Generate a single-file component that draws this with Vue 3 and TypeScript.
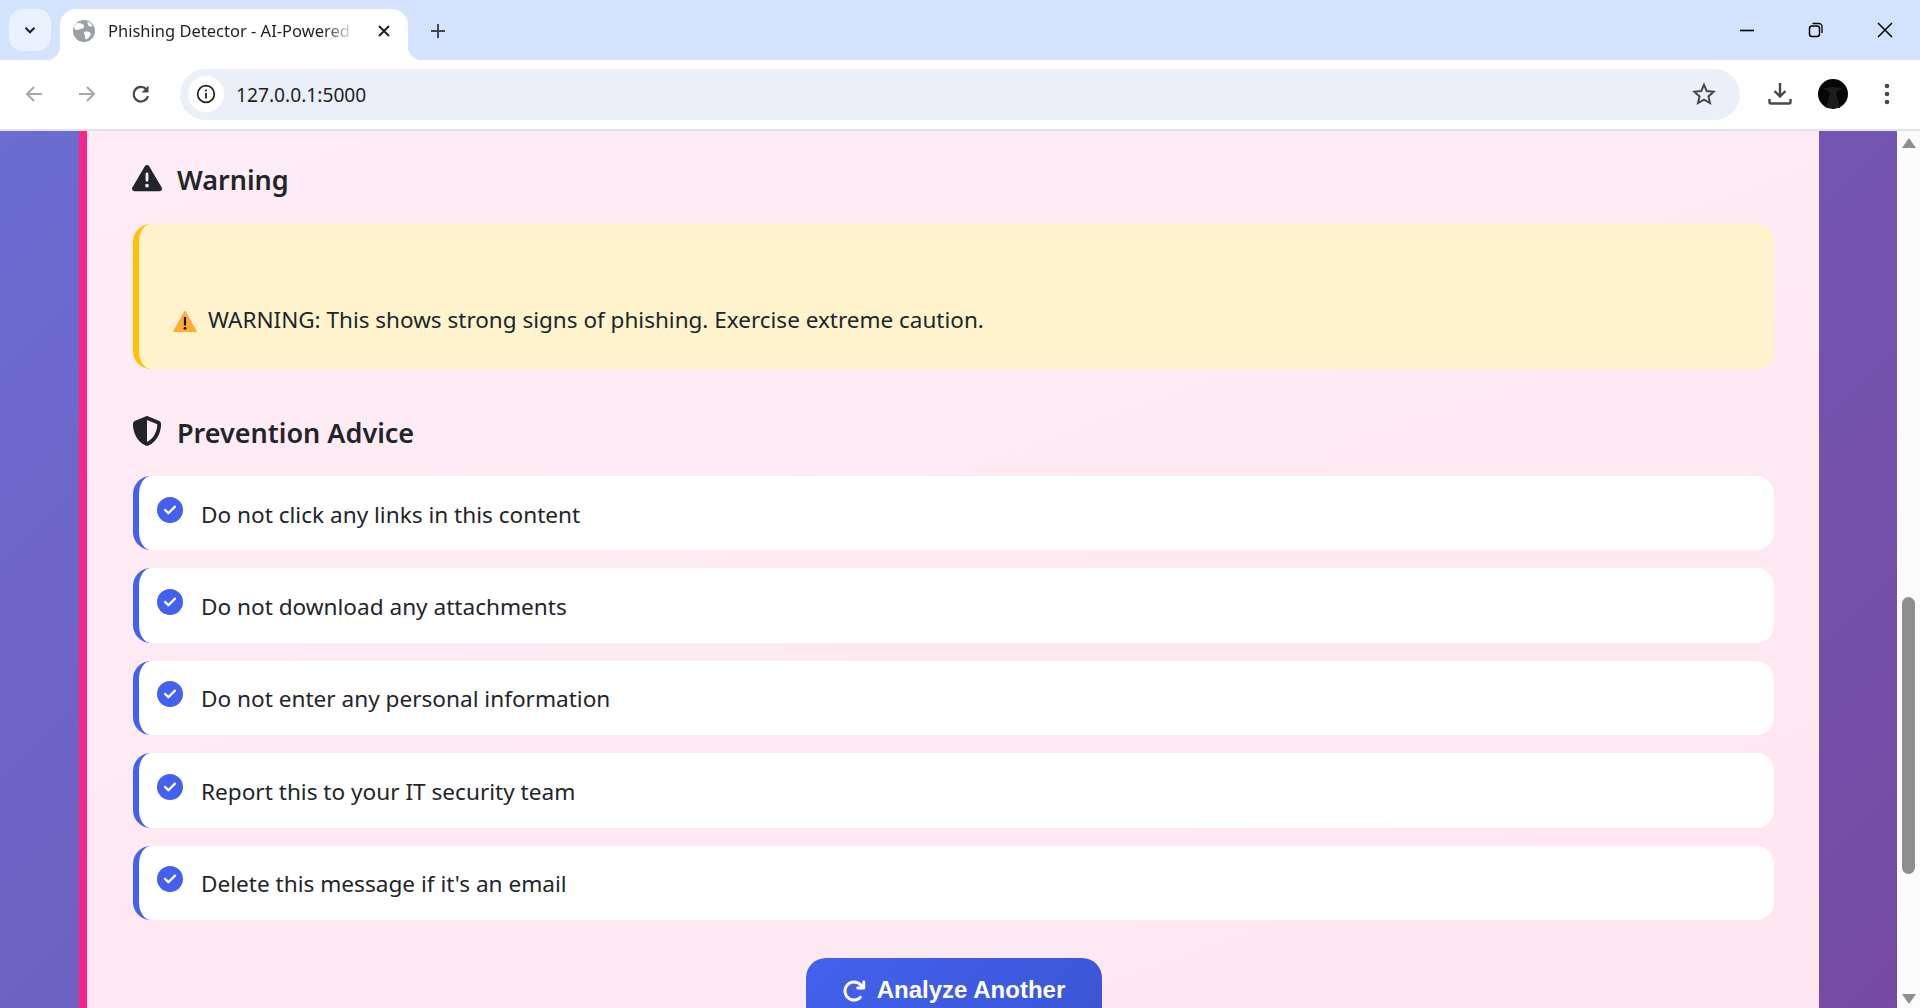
<script setup lang="ts">
const tips: string[] = [
  'Do not click any links in this content',
  'Do not download any attachments',
  'Do not enter any personal information',
  'Report this to your IT security team',
  "Delete this message if it's an email",
]
</script>

<template>
  <div class="window">
    <!-- browser chrome -->
    <div class="tabstrip">
      <button class="tab-search">
        <svg width="14" height="14" viewBox="0 0 14 14"><path d="M2.500 4.800 7 9.300l4.500-4.500" fill="none" stroke="#1f1f1f" stroke-width="2" /></svg>
      </button>
      <div class="tab">
        <svg class="globe" width="22" height="22" viewBox="0 0 18 18">
          <circle cx="9" cy="9" r="9" fill="#9aa0a6" />
          <path d="M4 2.500c3 .2 4.500 .8 5 2.500S7 7.500 5.500 7.500 3 9 1.500 7.500 2 3 4 2.500zM10 9.500c2 -.5 4 0 4.500 1.500s-2.500 4.500-4 5c-1-1.500-.5-3-1-4s-1-2 .5-2.500zM12 1.500c1.500 .5 3 1.500 4 3.500-1.500 .5-3 .3-3.500-1s-1-2-.5-2.500z" fill="#fff" />
        </svg>
        <span class="tab-title">Phishing Detector - AI-Powered</span>
        <svg class="tab-close" width="14" height="14" viewBox="0 0 14 14"><path d="M2 2l10 10M12 2 2 12" stroke="#1f1f1f" stroke-width="2" /></svg>
      </div>
      <svg class="new-tab" width="16" height="16" viewBox="0 0 16 16"><path d="M8 1v14M1 8h14" stroke="#474747" stroke-width="2" /></svg>
      <div class="win-controls">
        <svg width="16" height="16" viewBox="0 0 16 16"><path d="M1 8.500h14" stroke="#000" stroke-width="1.600" /></svg>
        <svg width="16" height="16" viewBox="0 0 16 16"><rect x="1.500" y="4" width="10" height="10.500" rx="2.500" fill="none" stroke="#000" stroke-width="1.500" /><path d="M4.500 1.500h6.500a3 3 0 0 1 3 3v6.500" fill="none" stroke="#000" stroke-width="1.300" /></svg>
        <svg width="16" height="16" viewBox="0 0 16 16"><path d="M1 1l14 14M15 1 1 15" stroke="#000" stroke-width="1.500" /></svg>
      </div>
    </div>
    <div class="toolbar">
      <svg width="20" height="20" viewBox="0 0 20 20"><path d="M18 10H3M10 3l-7 7 7 7" fill="none" stroke="#a8a8a8" stroke-width="2" /></svg>
      <svg class="fwd" width="20" height="20" viewBox="0 0 20 20"><path d="M2 10h15M10 3l7 7-7 7" fill="none" stroke="#a8a8a8" stroke-width="2" /></svg>
      <svg class="reload" width="20" height="20" viewBox="0 0 20 20"><path d="M17 12a7.300 7.300 0 1 1-1.500-6.500" fill="none" stroke="#474747" stroke-width="2.200" /><path d="M17.500 1.500v7h-7z" fill="#474747" /></svg>
      <div class="omnibox">
        <span class="site-info">
          <svg width="20" height="20" viewBox="0 0 20 20"><circle cx="10" cy="10" r="8.300" fill="none" stroke="#1f1f1f" stroke-width="1.700" /><path d="M10 9v5.500M10 5.500v2" stroke="#1f1f1f" stroke-width="1.800" /></svg>
        </span>
        <span class="url">127.0.0.1:5000</span>
        <svg class="star" width="24" height="24" viewBox="0 0 24 24"><path d="m12 2.800 2.800 6.300 6.800 .7-5.100 4.600 1.500 6.700-6-3.500-6 3.500 1.500-6.700-5.100-4.600 6.800-.7z" fill="none" stroke="#474747" stroke-width="2" /></svg>
      </div>
      <svg class="download" width="24" height="24" viewBox="0 0 24 24"><path d="M12 1v13M6.500 9l5.500 5.500L17.500 9" fill="none" stroke="#474747" stroke-width="2.400" /><path d="M1.500 17v3a1.500 1.500 0 0 0 1.500 1.500h18a1.500 1.500 0 0 0 1.500-1.500v-3" fill="none" stroke="#474747" stroke-width="2.400" /></svg>
      <svg class="avatar" width="30" height="30" viewBox="0 0 30 30"><circle cx="15" cy="15" r="15" fill="#060606" /><path d="M4 10c5-1.500 8-2 11-2s7 .5 11 2c-4 .5-7 2-8 4l4 15H8l4-15c-1-2-4-3.500-8-4z" fill="#1c1c1c" /></svg>
      <svg class="kebab" width="6" height="22" viewBox="0 0 6 22"><circle cx="3" cy="3" r="2.300" fill="#474747" /><circle cx="3" cy="11" r="2.300" fill="#474747" /><circle cx="3" cy="19" r="2.300" fill="#474747" /></svg>
    </div>

    <div class="viewport">
      <div class="page">
        <div class="card">
          <h3 class="heading">
            <svg class="h-icon" viewBox="0 0 512 512"><path d="M256 32c14.200 0 27.300 7.500 34.500 19.800l216 368c7.300 12.400 7.300 27.700 .2 40.100S486.300 480 472 480H40c-14.300 0-27.600-7.700-34.700-20.100s-7-27.800 .2-40.100l216-368C228.700 39.500 241.800 32 256 32zm0 128c-13.300 0-24 10.700-24 24V296c0 13.300 10.700 24 24 24s24-10.700 24-24V184c0-13.300-10.700-24-24-24zm32 224a32 32 0 1 0 -64 0 32 32 0 1 0 64 0z" /></svg>
            Warning
          </h3>
          <div class="alert">
            <svg class="emoji" viewBox="0 0 24 22"><path d="M12 1 23.500 21.500H.5z" fill="#ffac33" stroke="#ffac33" stroke-linejoin="round" /><path d="M12 7v8.500" stroke="#111" stroke-width="2.200" /><circle cx="12" cy="18.300" r="1.400" fill="#111" /></svg>
            <span>WARNING: This shows strong signs of phishing. Exercise extreme caution.</span>
          </div>

          <h3 class="heading advice">
            <svg class="h-icon" viewBox="0 0 512 512"><path d="M256 0c4.600 0 9.200 1 13.400 2.900L457.700 82.800c22 9.300 38.400 31 38.300 57.200c-.5 99.200-41.300 280.700-213.600 363.200c-16.700 8-36.100 8-52.800 0C57.300 420.700 16.500 239.200 16 140c-.1-26.200 16.300-47.900 38.300-57.200L242.700 2.900C246.800 1 251.400 0 256 0zm0 66.800V444.800C394 378 431.100 230.100 432 141.400L256 66.800l0 0z" /></svg>
            Prevention Advice
          </h3>
          <ul class="tips">
            <li v-for="tip in tips" :key="tip" class="tip">
              <svg class="check" viewBox="0 0 512 512"><path d="M256 512A256 256 0 1 0 256 0a256 256 0 1 0 0 512zM369 209L241 337c-9.400 9.400-24.600 9.400-33.900 0l-64-64c-9.400-9.400-9.400-24.600 0-33.900s24.600-9.400 33.900 0l47 47L335 175c9.400-9.400 24.600-9.400 33.900 0s9.400 24.600 0 33.900z" /></svg>
              <span>{{ tip }}</span>
            </li>
          </ul>
          <div class="actions">
            <button class="again">
              <svg class="again-icon" viewBox="0 0 512 512"><path d="M386.300 160H336c-17.700 0-32 14.300-32 32s14.300 32 32 32H464c17.700 0 32-14.300 32-32V64c0-17.700-14.300-32-32-32s-32 14.300-32 32v51.200L414.400 97.600c-87.500-87.500-229.300-87.500-316.800 0s-87.500 229.300 0 316.800s229.300 87.500 316.800 0c12.500-12.500 12.500-32.800 0-45.300s-32.800-12.500-45.300 0c-62.500 62.500-163.800 62.500-226.300 0s-62.500-163.800 0-226.300s163.800-62.500 226.300 0L386.300 160z" /></svg>
              Analyze Another
            </button>
          </div>
        </div>
      </div>
      <div class="scrollbar">
        <span class="arrow up"></span>
        <div class="track"><div class="thumb"></div></div>
        <span class="arrow down"></span>
      </div>
    </div>
  </div>
</template>

<style>
html, body { margin: 0; height: 100%; overflow: hidden; }
</style>

<style scoped>
* { box-sizing: border-box; }

.window {
  height: 1008px;
  display: flex;
  flex-direction: column;
  overflow: hidden;
  font-family: "Noto Sans", "Open Sans", sans-serif;
  color: #212529;
}

.tabstrip {
  height: 60px;
  flex: none;
  background: #d3e3fd;
  display: flex;
  padding: 9px 0 0 9px;
}
.tab-search {
  width: 42px;
  height: 42px;
  border: none;
  border-radius: 14px;
  background: #e9f0fe;
  display: flex;
  align-items: center;
  justify-content: center;
  padding: 0;
}
.tab {
  position: relative;
  margin-left: 9px;
  width: 348px;
  height: 51px;
  background: #fff;
  border-radius: 16px 16px 0 0;
  display: flex;
  align-items: center;
  padding: 0 0 8px 13px;
}
.tab::before, .tab::after {
  content: "";
  position: absolute;
  bottom: 0;
  width: 14px;
  height: 14px;
}
.tab::before { left: -14px; background: radial-gradient(circle at 0 0, transparent 14px, #fff 14.500px); }
.tab::after { right: -14px; background: radial-gradient(circle at 100% 0, transparent 14px, #fff 14.500px); }
.globe { flex: none; }
.tab-title {
  margin-left: 13px;
  width: 250px;
  flex: none;
  overflow: hidden;
  white-space: nowrap;
  font-size: 16.500px;
  color: #1f1f1f;
  -webkit-mask-image: linear-gradient(90deg, #000 86%, transparent 99%);
  mask-image: linear-gradient(90deg, #000 86%, transparent 99%);
}
.tab-close { margin-left: 19px; flex: none; }
.new-tab { margin: 14px 0 0 22px; }
.win-controls {
  margin-left: auto;
  display: flex;
  gap: 53px;
  padding: 13px 27px 0 0;
  height: 30px;
}

.toolbar {
  height: 71px;
  flex: none;
  background: #fff;
  border-bottom: 2px solid #e1e3e6;
  border-radius: 16px 16px 0 0;
  display: flex;
  align-items: center;
  padding: 0 0 1px 24px;
}
.fwd { margin-left: 33px; }
.reload { margin-left: 34px; }
.omnibox {
  margin-left: 29px;
  width: 1560px;
  height: 51px;
  border-radius: 26px;
  background: #ebeff9;
  display: flex;
  align-items: center;
  padding: 0 24px 0 8px;
}
.site-info {
  width: 36px;
  height: 36px;
  border-radius: 50%;
  background: #fff;
  display: flex;
  align-items: center;
  justify-content: center;
}
.url { margin-left: 12px; font-size: 19.200px; color: #1f1f1f; }
.star { margin-left: auto; }
.download { margin-left: 28px; }
.avatar { margin-left: 26px; }
.kebab { margin-left: 36px; }

.viewport {
  flex: 1;
  min-height: 0;
  display: flex;
}
.page {
  flex: 1;
  min-width: 0;
  overflow: hidden;
  padding: 0 78px 0 79px;
  background: linear-gradient(135deg, #667eea, #764ba2) left bottom / 100% 2400px no-repeat;
}
.card {
  height: 100%;
  background: linear-gradient(160deg, #feedf6, #fee6f0);
  border-left: 8px solid #f72585;
  padding: 0 45px 0 46px;
}

.heading {
  margin: 0;
  height: 36px;
  display: flex;
  align-items: center;
  gap: 15px;
  font-size: 27px;
  font-weight: 600;
  line-height: 36px;
  position: relative;
  top: 31px;
}
.h-icon { width: 30px; height: 30px; fill: #212529; flex: none; margin: -5px 0 0 -1px; }

.alert {
  margin-top: 57px;
  height: 145px;
  border-left: 6px solid #ffc107;
  border-radius: 18px;
  background: #fff3cd;
  display: flex;
  align-items: flex-end;
  padding: 0 0 31px 34px;
  font-size: 22.500px;
  line-height: 36px;
}
.emoji { width: 24px; height: 22px; margin: 0 11px 6px 0; flex: none; }

.advice { top: 0; margin-top: 46px; }

.tips {
  list-style: none;
  margin: 25px 0 0;
  padding: 0;
  display: flex;
  flex-direction: column;
  gap: 18px;
}
.tip {
  height: 74.400px;
  background: #fff;
  border-left: 6px solid #4361ee;
  border-radius: 18px;
  display: flex;
  align-items: center;
  padding: 2px 0 0 18px;
  font-size: 22.600px;
}
.check {
  width: 26px;
  height: 26px;
  fill: #4361ee;
  flex: none;
  margin: -9px 18px 0 0;
}

.actions {
  margin-top: 38px;
  display: flex;
  justify-content: center;
}
.again {
  width: 296px;
  height: 70px;
  border: none;
  border-radius: 20px;
  background: linear-gradient(135deg, #4361ee, #3a56d4);
  color: #fff;
  font-family: "Liberation Sans", Arial, sans-serif;
  font-size: 24px;
  font-weight: 700;
  display: flex;
  align-items: flex-start;
  justify-content: center;
  gap: 11px;
  padding: 18px 0 0;
}
.again-icon { width: 24px; height: 24px; fill: #fff; margin-top: 3px; }

.scrollbar {
  width: 23px;
  flex: none;
  background: #fbfbfb;
  display: flex;
  flex-direction: column;
  align-items: center;
  position: relative;
}
.track { flex: 1; width: 100%; position: relative; }
.thumb {
  position: absolute;
  top: 449px;
  left: 5px;
  width: 13px;
  height: 277px;
  background: #8e8e8e;
  border-radius: 7px;
}
.arrow { width: 0; height: 0; border-left: 7px solid transparent; border-right: 7px solid transparent; }
.up { margin-top: 7px; border-bottom: 10px solid #8e8e8e; }
.down { margin-bottom: 4px; border-top: 10px solid #8e8e8e; }
</style>
